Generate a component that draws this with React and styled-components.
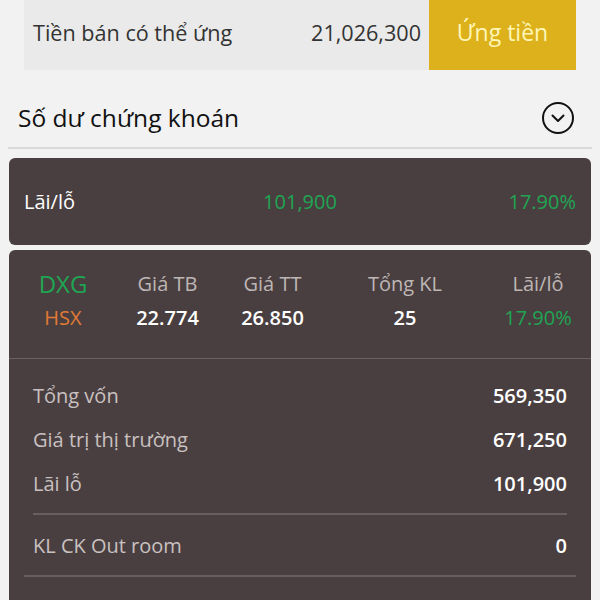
import React from "react";
import styled, { createGlobalStyle } from "styled-components";

const GlobalStyle = createGlobalStyle`
  body {
    margin: 0;
    background: #f2f2f2;
    font-family: "Open Sans", "Noto Sans", sans-serif;
  }
`;

const Page = styled.div`
  width: 600px;
  height: 600px;
  overflow: hidden;
`;

const AdvanceBar = styled.div`
  display: flex;
  height: 70px;
  margin: 0 24px;
`;

const AdvanceInfo = styled.div`
  flex: 1;
  display: flex;
  align-items: center;
  justify-content: space-between;
  padding: 0 8px 6px 9px;
  background: #eaeaea;
  font-size: 21.6px;
  color: #333;
`;

const AdvanceButton = styled.button`
  width: 147px;
  border: none;
  background: #dcb11b;
  color: #fff6b8;
  font-family: inherit;
  font-size: 23px;
  padding: 0 0 6px;
`;

const SectionHeader = styled.div`
  display: flex;
  align-items: center;
  justify-content: space-between;
  height: 59px;
  padding: 18px 17px 0 10px;
  margin: 0 8px;
  border-bottom: 2px solid #d9d9d9;
  font-size: 24.5px;
  color: #111;
`;

const Card = styled.div`
  margin: ${(p) => p.$mt}px 9px 0;
  background: #4a3f40;
  border-radius: ${(p) => (p.$open ? "6px 6px 0 0" : "6px")};
`;

const TotalRow = styled.div`
  display: grid;
  grid-template-columns: 1fr 1fr 1fr;
  align-items: center;
  height: 87px;
  padding: 0 15px;
  font-size: 20px;
`;

const Cell = styled.span`
  color: ${(p) => p.$color || "#fff"};
  text-align: ${(p) => p.$align || "center"};
  font-weight: ${(p) => (p.$bold ? 600 : 400)};
  font-size: ${(p) => p.$size || "inherit"};
`;

const StockGrid = styled.div`
  display: grid;
  grid-template-columns: 104px 105px 105px 160px 1fr;
  grid-auto-rows: 34px;
  align-content: start;
  align-items: center;
  height: 92px;
  padding: 16px 0 0 2px;
  border-bottom: 1px solid #6c6263;
  font-size: 20px;
`;

const Details = styled.div`
  padding: 14px 24px 0;
`;

const DetailRow = styled.div`
  display: flex;
  align-items: center;
  justify-content: space-between;
  height: ${(p) => p.$h || 44}px;
  font-size: 20px;
  color: #c9c1c0;
`;

const DetailValue = styled.span`
  color: #fff;
  font-weight: 600;
`;

const Rule = styled.div`
  height: 2px;
  background: #685e5f;
  margin: ${(p) => p.$m || "0"};
`;

function CircleChevron() {
  return (
    <svg width="34" height="34" viewBox="0 0 34 34" fill="none">
      <circle cx="17" cy="17" r="15" stroke="#111" strokeWidth="2" />
      <path d="M11.5 14.5 L17 20 L22.5 14.5" stroke="#111" strokeWidth="2" strokeLinecap="round" strokeLinejoin="round" />
    </svg>
  );
}

const details = [
  { label: "Tổng vốn", value: "569,350" },
  { label: "Giá trị thị trường", value: "671,250" },
  { label: "Lãi lỗ", value: "101,900" },
];

export default function App() {
  const green = "#1ea553";
  const muted = "#bdb6b5";
  return (
    <Page>
      <GlobalStyle />
      <AdvanceBar>
        <AdvanceInfo>
          <span>Tiền bán có thể ứng</span>
          <span>21,026,300</span>
        </AdvanceInfo>
        <AdvanceButton>Ứng tiền</AdvanceButton>
      </AdvanceBar>

      <SectionHeader>
        <span>Số dư chứng khoán</span>
        <CircleChevron />
      </SectionHeader>

      <Card $mt={9}>
        <TotalRow>
          <Cell $align="left">Lãi/lỗ</Cell>
          <Cell $color={green}>101,900</Cell>
          <Cell $color={green} $align="right">17.90%</Cell>
        </TotalRow>
      </Card>

      <Card $mt={5} $open>
        <StockGrid>
          <Cell $color={green} $size="24px">DXG</Cell>
          <Cell $color={muted}>Giá TB</Cell>
          <Cell $color={muted}>Giá TT</Cell>
          <Cell $color={muted}>Tổng KL</Cell>
          <Cell $color={muted}>Lãi/lỗ</Cell>
          <Cell $color="#e07a35">HSX</Cell>
          <Cell $bold>22.774</Cell>
          <Cell $bold>26.850</Cell>
          <Cell $bold>25</Cell>
          <Cell $color={green}>17.90%</Cell>
        </StockGrid>
        <Details>
          {details.map((d) => (
            <DetailRow key={d.label}>
              <span>{d.label}</span>
              <DetailValue>{d.value}</DetailValue>
            </DetailRow>
          ))}
          <Rule $m="8px 0 0" />
          <DetailRow $h={60}>
            <span>KL CK Out room</span>
            <DetailValue>0</DetailValue>
          </DetailRow>
        </Details>
        <Rule $m="0 15px" />
        <div style={{ height: 40 }} />
      </Card>
    </Page>
  );
}
